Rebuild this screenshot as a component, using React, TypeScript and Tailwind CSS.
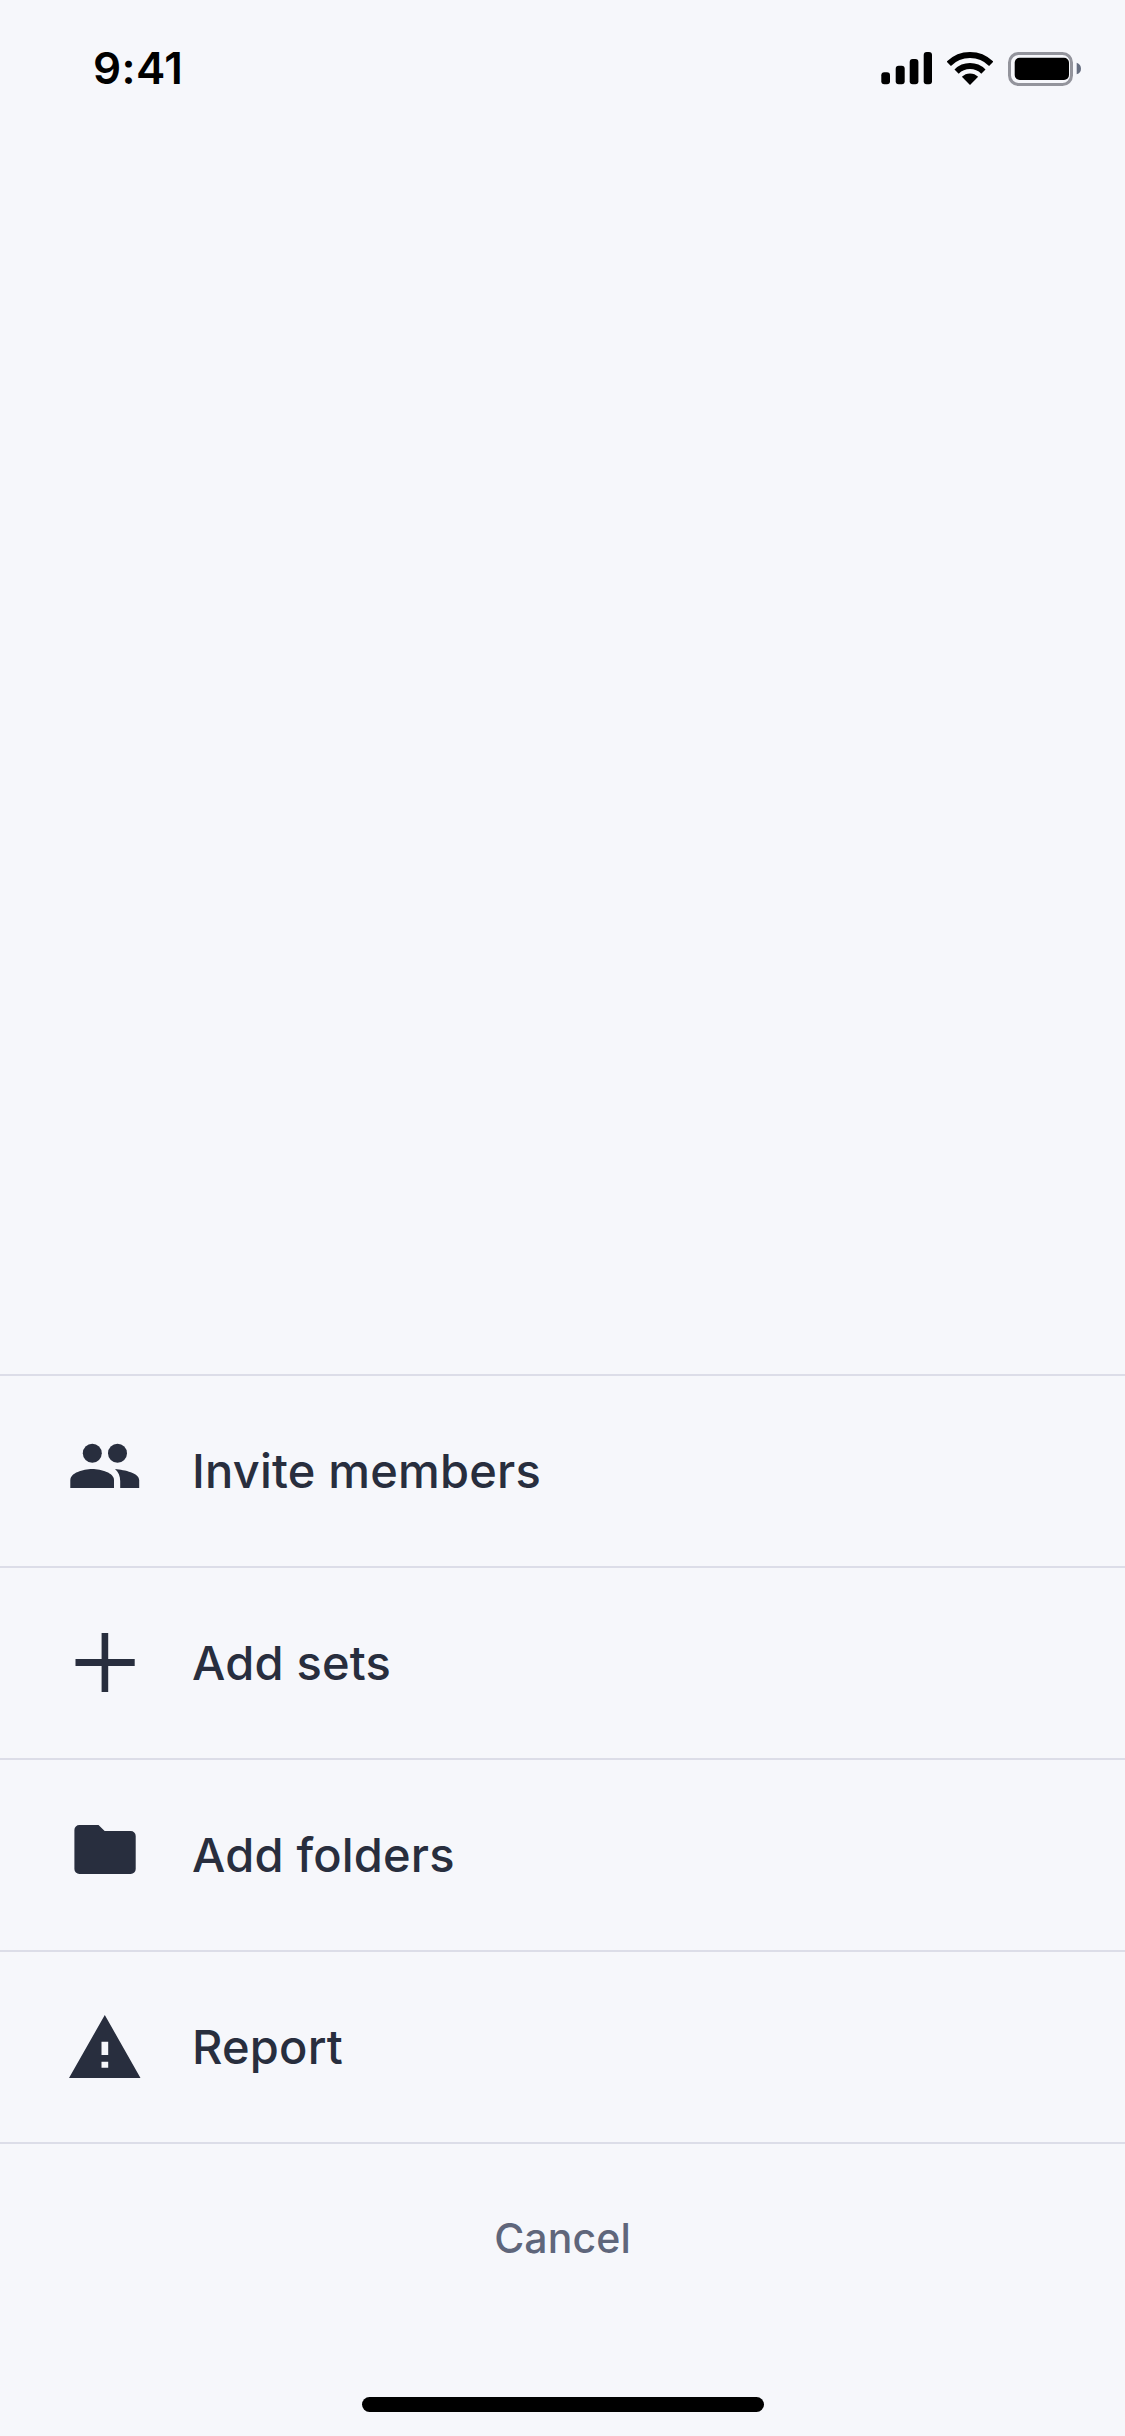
const rows = [
  { label: "Invite members", icon: <People /> },
  { label: "Add sets", icon: <Plus /> },
  { label: "Add folders", icon: <Folder /> },
  { label: "Report", icon: <Warning /> },
];

function People() {
  return (
    <svg width="74" height="74" viewBox="0 0 74 74" fill="#282e3e">
      <circle cx="24.3" cy="19.3" r="9.5" />
      <circle cx="49.5" cy="19.3" r="9.5" />
      <path d="M2.3 54V46C2.3 39 15 35 24.2 35C33.4 35 46 39 46 46V54Z" />
      <path d="M47 35C57 36 71.2 39 71.2 46V54H52.2V47C52.2 42 50.5 38 47 35Z" />
    </svg>
  );
}

function Plus() {
  return (
    <svg width="74" height="74" viewBox="0 0 74 74" fill="#282e3e">
      <rect x="33.6" y="7" width="6.6" height="59" />
      <rect x="7.5" y="33" width="59.2" height="7" />
    </svg>
  );
}

function Folder() {
  return (
    <svg width="74" height="74" viewBox="0 0 74 74" fill="#282e3e">
      <path d="M11.4 7H30.5L36.7 13H62.7a5 5 0 0 1 5 5V51a5 5 0 0 1-5 5H11.4a5 5 0 0 1-5-5V12a5 5 0 0 1 5-5Z" />
    </svg>
  );
}

function Warning() {
  return (
    <svg width="74" height="74" viewBox="0 0 74 74" fill="#282e3e">
      <path
        fillRule="evenodd"
        d="M36.8 5L72.5 68H1ZM33.5 31.7V45H40.2V31.7ZM33.5 51.7V57.7H40.2V51.7Z"
      />
    </svg>
  );
}

function StatusIcons() {
  return (
    <div className="flex items-start gap-[15px]">
      <svg width="51" height="33" viewBox="0 0 51 33" fill="#000">
        <rect x="0.3" y="20.3" width="8.7" height="12" rx="3" />
        <rect x="14.7" y="13.7" width="9" height="18.6" rx="3" />
        <rect x="28.7" y="7" width="8.7" height="25.3" rx="3" />
        <rect x="42.7" y="0" width="8.3" height="32.3" rx="3" />
      </svg>
      <svg width="46" height="33" viewBox="0 0 46 33" fill="none">
        <path d="M1.8 11.8A30 30 0 0 1 44.2 11.8" stroke="#000" strokeWidth="6" />
        <path d="M9.6 19.6A19 19 0 0 1 36.4 19.6" stroke="#000" strokeWidth="6" />
        <path d="M23 33L14.87 24.87A11.5 11.5 0 0 1 31.13 24.87Z" fill="#000" />
      </svg>
      <svg width="74" height="34" viewBox="0 0 74 34" fill="none">
        <rect x="1.5" y="1.5" width="62" height="31" rx="9" stroke="#93949c" strokeWidth="3" />
        <rect x="6.7" y="5.7" width="54.3" height="22.3" rx="5" fill="#000" />
        <path d="M68.7 10.7C71.5 11.5 73 14 73 16.7C73 19.4 71.5 21.5 68.7 22.3Z" fill="#666e80" />
      </svg>
    </div>
  );
}

export default function App() {
  return (
    <div className="flex h-[2436px] w-[1125px] flex-col bg-[#f6f7fb] font-['Inter',sans-serif] text-[#282e3e]">
      <div className="flex items-start justify-between pl-[93px] pr-[43px] pt-[41px]">
        <span className="text-[44px] font-semibold leading-[55px] tracking-[0.4px] text-[#000]">9:41</span>
        <div className="pt-[11px]">
          <StatusIcons />
        </div>
      </div>
      <div className="flex-1" />
      {rows.map((row) => (
        <div
          key={row.label}
          className="flex h-[192px] items-center gap-[50px] border-t-2 border-[#dcdde8] pl-[68px]"
        >
          {row.icon}
          <span className="text-[47px] font-medium leading-[56px] tracking-[0.2px]">{row.label}</span>
        </div>
      ))}
      <div className="flex h-[294px] flex-col items-center border-t-2 border-[#dcdde8] pb-[24px]">
        <span className="pt-[66px] text-[41px] font-medium leading-[56px] tracking-[0.1px] text-[#5f667b]">Cancel</span>
        <div className="flex-1" />
        <div className="h-[15px] w-[402px] rounded-full bg-[#000]" />
      </div>
    </div>
  );
}
